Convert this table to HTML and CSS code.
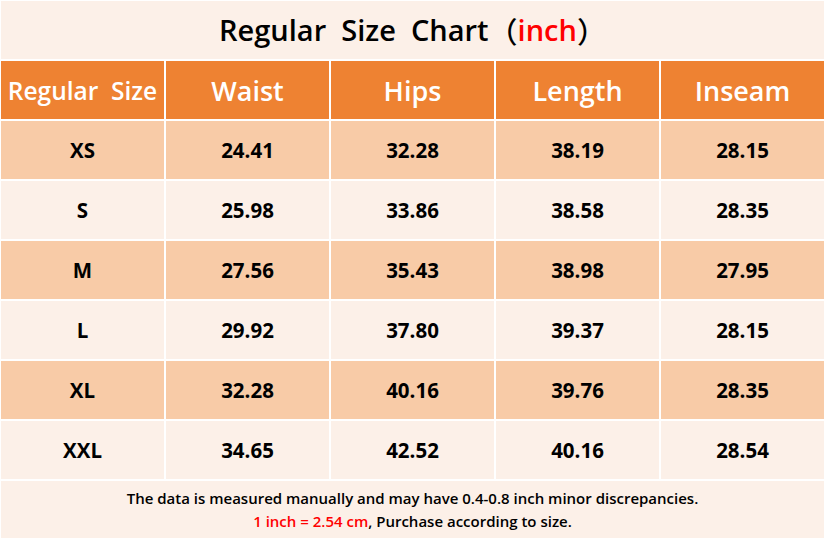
FILE: index.html
```html
<!DOCTYPE html>
<html>
<head>
<meta charset="utf-8">
<link rel="stylesheet" href="styles.css">
</head>
<body>
<div class="chart">
  <div class="title">Regular&nbsp; Size&nbsp; Chart<span class="paren">（</span><span class="red">inch</span><span class="paren">）</span></div>
  <div class="grid">
    <div class="cell head small">Regular&nbsp; Size</div>
    <div class="cell head">Waist</div>
    <div class="cell head">Hips</div>
    <div class="cell head">Length</div>
    <div class="cell head">Inseam</div>

    <div class="cell dark">XS</div><div class="cell dark">24.41</div><div class="cell dark">32.28</div><div class="cell dark">38.19</div><div class="cell dark">28.15</div>
    <div class="cell light">S</div><div class="cell light">25.98</div><div class="cell light">33.86</div><div class="cell light">38.58</div><div class="cell light">28.35</div>
    <div class="cell dark">M</div><div class="cell dark">27.56</div><div class="cell dark">35.43</div><div class="cell dark">38.98</div><div class="cell dark">27.95</div>
    <div class="cell light">L</div><div class="cell light">29.92</div><div class="cell light">37.80</div><div class="cell light">39.37</div><div class="cell light">28.15</div>
    <div class="cell dark">XL</div><div class="cell dark">32.28</div><div class="cell dark">40.16</div><div class="cell dark">39.76</div><div class="cell dark">28.35</div>
    <div class="cell light">XXL</div><div class="cell light">34.65</div><div class="cell light">42.52</div><div class="cell light">40.16</div><div class="cell light">28.54</div>
  </div>
  <div class="footer">
    <p>The data is measured manually and may have 0.4-0.8 inch minor discrepancies.</p>
    <p><span class="red">1 inch = 2.54 cm</span>, Purchase according to size.</p>
  </div>
</div>
</body>
</html>
```
FILE: styles.css
```css
html, body {
  margin: 0;
  padding: 0;
  background: #ffffff;
}
body {
  width: 827px;
  height: 542px;
  overflow: hidden;
  font-family: "Open Sans", "Noto Sans CJK SC", sans-serif;
}
.chart {
  padding: 1px 3px 4px 1px;
  display: flex;
  flex-direction: column;
  gap: 2px;
}
.title {
  height: 58px;
  background: #fcf0e8;
  color: #000;
  font-size: 29px;
  font-weight: 600;
  display: flex;
  align-items: center;
  justify-content: center;
  padding-bottom: 1px;
  box-sizing: border-box;
}
.paren {
  font-family: "Noto Sans CJK SC", sans-serif;
  font-weight: 500;
}
.red {
  color: #ff0000;
}
.grid {
  display: grid;
  grid-template-columns: repeat(5, 163px);
  grid-auto-rows: 58px;
  gap: 2px;
}
.cell {
  display: flex;
  align-items: center;
  justify-content: center;
  font-size: 20.5px;
  font-weight: 700;
  color: #000;
}
.head {
  background: #ee8232;
  color: #fff;
  font-size: 27px;
  font-weight: 600;
}
.head.small {
  font-size: 24.5px;
}
.dark {
  background: #f8cba7;
}
.light {
  background: #fcf0e8;
}
.footer {
  height: 57px;
  background: #fcf0e8;
  display: flex;
  flex-direction: column;
  align-items: center;
  justify-content: center;
  gap: 3px;
  font-size: 15px;
  font-weight: 600;
  color: #000;
}
.footer p {
  margin: 0;
  line-height: 20px;
}
```
